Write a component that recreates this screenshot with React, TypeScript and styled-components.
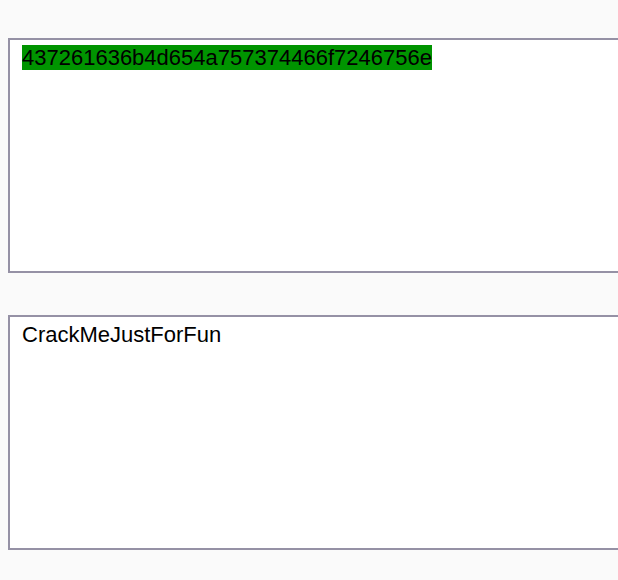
import React from 'react';
import styled, { createGlobalStyle } from 'styled-components';

const GlobalStyle = createGlobalStyle`
  html, body {
    margin: 0;
    padding: 0;
    background-color: #fafafa;
  }
`;

const Page = styled.div`
  box-sizing: border-box;
  width: 100%;
  height: 580px;
  overflow: hidden;
  display: flex;
  flex-direction: column;
  gap: 42px;
  padding: 38px 0 0 8px;
`;

const TextBox = styled.div`
  box-sizing: border-box;
  flex: none;
  width: 680px;
  height: 235px;
  padding: 4px 12px;
  border: 2px solid #9591a5;
  background-color: #fff;
  font-family: "Liberation Sans", Arial, sans-serif;
  font-size: 22px;
  line-height: 27px;
  color: #000;
  white-space: pre-wrap;
`;

const Selected = styled.span`
  background-color: #009400;
`;

const App: React.FC = () => {
  return (
    <>
      <GlobalStyle />
      <Page>
        <TextBox>
          <Selected>437261636b4d654a757374466f7246756e</Selected>
        </TextBox>
        <TextBox>CrackMeJustForFun</TextBox>
      </Page>
    </>
  );
};

export default App;
